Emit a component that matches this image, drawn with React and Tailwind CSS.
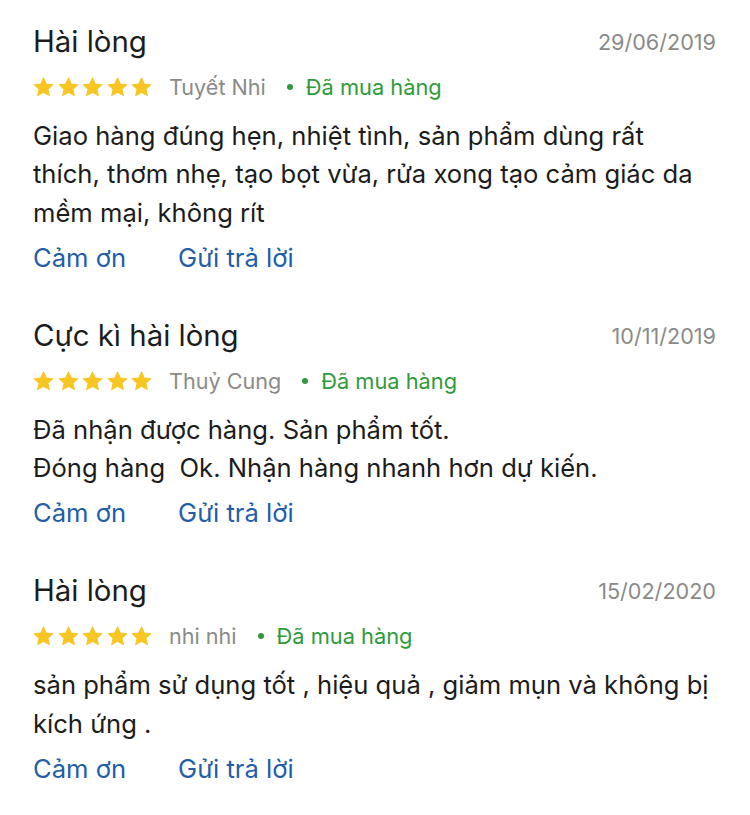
import React from "react";

const reviews = [
  {
    title: "Hài lòng",
    date: "29/06/2019",
    name: "Tuyết Nhi",
    body: ["Giao hàng đúng hẹn, nhiệt tình, sản phẩm dùng rất thích, thơm nhẹ, tạo bọt vừa, rửa xong tạo cảm giác da mềm mại, không rít"],
  },
  {
    title: "Cực kì hài lòng",
    date: "10/11/2019",
    name: "Thuỷ Cung",
    body: ["Đã nhận được hàng. Sản phẩm tốt.", "Đóng hàng\u00a0 Ok. Nhận hàng nhanh hơn dự kiến."],
  },
  {
    title: "Hài lòng",
    date: "15/02/2020",
    name: "nhi nhi",
    body: ["sản phẩm sử dụng tốt , hiệu quả , giảm mụn và không bị kích ứng ."],
  },
];

function Star() {
  return (
    <svg width="21" height="20" viewBox="0 0 24 23" className="shrink-0">
      <path
        d="M12 1.2l3.2 6.9 7.5.8-5.6 5.1 1.6 7.4L12 17.6l-6.7 3.8 1.6-7.4L1.3 8.9l7.5-.8z"
        fill="#f8c623"
        stroke="#f8c623"
        strokeWidth="1.2"
        strokeLinejoin="round"
      />
    </svg>
  );
}

function Review({ r }) {
  return (
    <div className="flex flex-col">
      <div className="flex items-center justify-between h-[36px]">
        <div className="text-[29.4px] text-[#1c1c1c] leading-[36px]">{r.title}</div>
        <div className="text-[21.6px] text-[#8a8a8a] leading-[36px]">{r.date}</div>
      </div>
      <div className="flex items-center h-[28px] mt-[13px]">
        <div className="flex items-center gap-[3.5px]">
          <Star /><Star /><Star /><Star /><Star />
        </div>
        <span className="ml-[17px] text-[21.6px] text-[#8a8a8a]">{r.name}</span>
        <span className="ml-[21px] w-[6px] h-[6px] rounded-full bg-[#2f9a3c]"></span>
        <span className="ml-[13px] text-[21.8px] text-[#2f9a3c]">Đã mua hàng</span>
      </div>
      <div className="mt-[16px] text-[25.6px] leading-[38.3px] text-[#1c1c1c]">
        {r.body.map((l, i) => (
          <div key={i}>{l}</div>
        ))}
      </div>
      <div className="flex items-center mt-[10px] h-[32px] text-[25.6px] text-[#1f5ea8]">
        <span>Cảm ơn</span>
        <span className="ml-[52px]">Gửi trả lời</span>
      </div>
    </div>
  );
}

export default function App() {
  return (
    <div
      className="w-[750px] min-h-[815px] bg-white pl-[33px] pr-[34px] pt-[24px] flex flex-col gap-[44px]"
      style={{ fontFamily: "Inter, 'Noto Sans', sans-serif" }}
    >
      {reviews.map((r, i) => (
        <Review key={i} r={r} />
      ))}
    </div>
  );
}
